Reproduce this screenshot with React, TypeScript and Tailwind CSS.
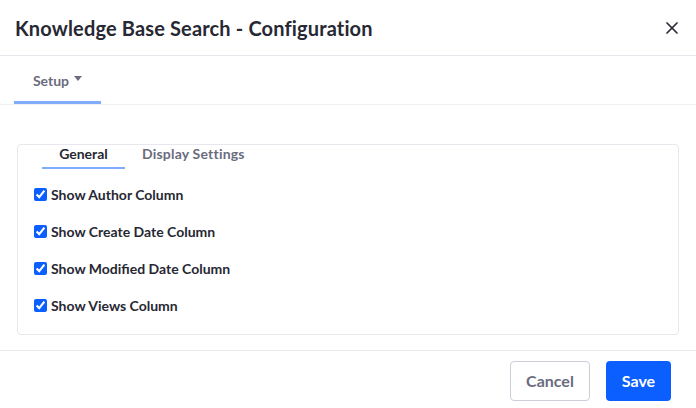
import { X } from "lucide-react";

const options = [
  "Show Author Column",
  "Show Create Date Column",
  "Show Modified Date Column",
  "Show Views Column",
];

const App = () => {
  return (
    <div
      className="w-[696px] h-[408px] bg-white flex flex-col text-[#272833] overflow-hidden"
      style={{ fontFamily: "Lato, 'Noto Sans', sans-serif" }}
    >
      <header className="h-[56px] shrink-0 flex items-center justify-between pl-[15px] pr-[14px] border-b border-[#e7e7ed]">
        <h1 className="text-[20px] font-bold tracking-[0.15px]">Knowledge Base Search - Configuration</h1>
        <X className="w-[20px] h-[20px] text-[#272833]" strokeWidth={2} />
      </header>

      <nav className="h-[49px] shrink-0 flex items-end px-[14px] border-b border-[#f1f2f5]">
        <div className="w-[87px] h-full flex items-center justify-center gap-[5px] border-b-[3px] border-[#80acff] pt-[3px] text-[14px] font-bold text-[#6b6c7e]">
          <span>Setup</span>
          <svg width="8" height="5" viewBox="0 0 8 5" className="mb-[3px]">
            <path d="M0 0h8L4 5z" fill="#6b6c7e" />
          </svg>
        </div>
      </nav>

      <main className="flex-1 px-[17px] pt-[39px]">
        <div className="h-[191px] border border-[#e7e7ed] rounded-[4px] px-[16px]">
          <div className="flex gap-[17px] pl-[8px]">
            <div className="w-[83px] h-[24px] flex items-start justify-center border-b-2 border-[#80acff] text-[14px] font-bold text-[#272833] leading-[18px]">
              General
            </div>
            <div className="h-[22px] flex items-start text-[14px] font-bold text-[#6b6c7e] leading-[18px] tracking-[0.2px]">
              Display Settings
            </div>
          </div>
          <div className="flex flex-col gap-[19px] pt-[16px]">
            {options.map((label) => (
              <label key={label} className="flex items-center gap-[4px] h-[18px] text-[14px] font-bold">
                <input type="checkbox" defaultChecked className="w-[13px] h-[13px] m-0 accent-[#0b5fff]" />
                <span>{label}</span>
              </label>
            ))}
          </div>
        </div>
      </main>

      <footer className="h-[58px] shrink-0 flex items-start justify-end gap-[16px] pt-[10px] pr-[25px] border-t border-[#e7e7ed]">
        <button className="w-[80px] h-[40px] rounded-[4px] border border-[#cdced9] text-[#6b6c7e] text-[16px] font-bold bg-white">
          Cancel
        </button>
        <button className="w-[65px] h-[40px] rounded-[4px] bg-[#0b5fff] text-white text-[16px] font-bold">
          Save
        </button>
      </footer>
    </div>
  );
};

export default App;
